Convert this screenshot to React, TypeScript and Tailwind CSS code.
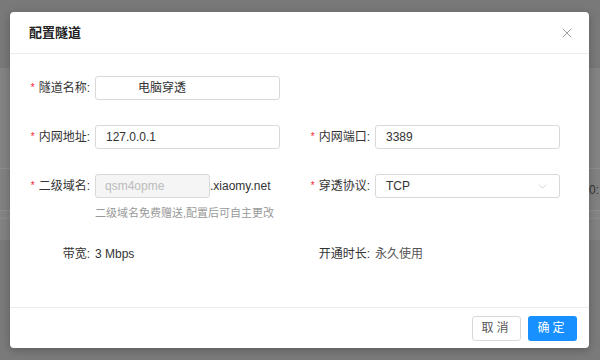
import { X, ChevronDown } from 'lucide-react';

const font = "font-['Liberation_Sans','Noto_Sans_CJK_SC',sans-serif]";

function Label({ text, required = true }: { text: string; required?: boolean }) {
    return (
        <div className="w-[75px] shrink-0 pr-[5px] flex items-center justify-end text-[12px] text-[#333] whitespace-nowrap">
            {required && <span className="text-[#f5222d] text-[10px] mr-[4px] leading-none">*</span>}
            <span>{text}:</span>
        </div>
    );
}

function Input({ value, className = '' }: { value: string; className?: string }) {
    return (
        <div
            className={`h-[24px] w-[185px] rounded-[3px] border border-[#d9d9d9] bg-white flex items-center px-[10px] text-[12px] text-[#333] ${className}`}
        >
            {value}
        </div>
    );
}

export default function App() {
    return (
        <div className={`relative w-[600px] h-[360px] overflow-hidden bg-[#7d7d7d] ${font}`}>
            {/* page behind the mask */}
            <div className="flex flex-col h-full">
                <div className="h-[68px] bg-[#797979]" />
                <div className="h-[100px] bg-[#838383]" />
                <div className="h-px bg-[#8e8e8e]" />
                <div className="h-[41px] bg-[#818181] flex items-center justify-end pr-[1px] text-[12px] text-[#333]">0:</div>
                <div className="h-px bg-[#8e8e8e]" />
                <div className="h-[7px] bg-[#848484]" />
                <div className="h-px bg-[#8c8c8c]" />
                <div className="h-[21px] bg-[#828282]" />
                <div className="flex-1 bg-[#7a7a7a]" />
            </div>

            {/* modal */}
            <div className="absolute left-[10px] top-[12px] w-[579px] h-[336px] bg-white rounded-[4px] shadow-[0_2px_8px_rgba(0,0,0,0.25)] flex flex-col">
                <div className="h-[42px] shrink-0 border-b border-[#ececec] flex items-center justify-between pl-[19px] pr-[14px]">
                    <span className="text-[13px] font-bold text-[#222]">配置隧道</span>
                    <X size={16} strokeWidth={1.2} className="text-[#888]" />
                </div>

                <div className="flex-1 pl-[10px] pt-[22px]">
                    <div className="grid grid-cols-[260px_260px] gap-x-[20px]">
                        <div className="flex h-[24px]">
                            <Label text="隧道名称" />
                            <Input value="电脑穿透" className="pl-[42px]" />
                        </div>
                        <div />

                        <div className="flex h-[24px] mt-[25px]">
                            <Label text="内网地址" />
                            <Input value="127.0.0.1" />
                        </div>
                        <div className="flex h-[24px] mt-[25px]">
                            <Label text="内网端口" />
                            <Input value="3389" />
                        </div>

                        <div className="mt-[25px]">
                            <div className="flex h-[24px]">
                                <Label text="二级域名" />
                                <div className="h-[24px] w-[115px] rounded-[3px] border border-[#d9d9d9] bg-[#f5f5f5] flex items-center px-[9px] text-[12px] text-[#bbb]">
                                    qsm4opme
                                </div>
                                <span className="flex items-center text-[12px] text-[#333]">.xiaomy.net</span>
                            </div>
                            <div className="pl-[75px] mt-[8px] text-[11px] text-[#999] leading-[14px] whitespace-nowrap">
                                二级域名免费赠送,配置后可自主更改
                            </div>
                        </div>
                        <div className="flex h-[24px] mt-[25px]">
                            <Label text="穿透协议" />
                            <div className="h-[24px] w-[185px] rounded-[3px] border border-[#d9d9d9] bg-white flex items-center justify-between pl-[10px] pr-[10px] text-[12px] text-[#333]">
                                <span>TCP</span>
                                <ChevronDown size={13} strokeWidth={1.2} className="text-[#bbb]" />
                            </div>
                        </div>

                        <div className="flex h-[24px] mt-[22px] items-center">
                            <Label text="带宽" required={false} />
                            <span className="text-[12px] text-[#333]">3 Mbps</span>
                        </div>
                        <div className="flex h-[24px] mt-[22px] items-center">
                            <Label text="开通时长" required={false} />
                            <span className="text-[12px] text-[#555]">永久使用</span>
                        </div>
                    </div>
                </div>

                <div className="h-[41px] shrink-0 border-t border-[#ececec] flex items-center justify-end gap-[7px] pr-[12px]">
                    <button className="h-[25px] w-[49px] rounded-[3px] border border-[#d9d9d9] bg-white text-[12px] text-[#555] tracking-[3px]">
                        取消
                    </button>
                    <button className="h-[25px] w-[49px] rounded-[3px] bg-[#1890ff] text-[12px] text-white tracking-[3px]">
                        确定
                    </button>
                </div>
            </div>
        </div>
    );
}
